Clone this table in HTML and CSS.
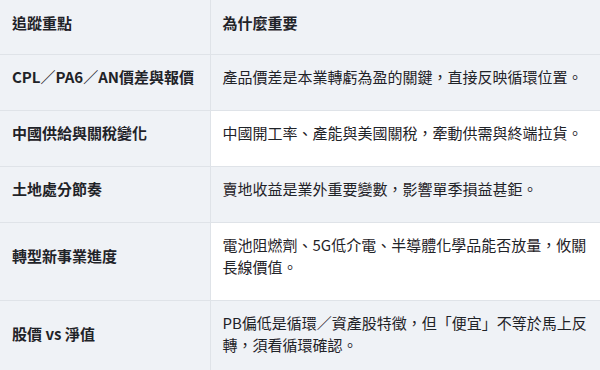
FILE: index.html
```html
<!DOCTYPE html>
<html lang="zh-Hant">
<head>
<meta charset="utf-8">
<link rel="stylesheet" href="styles.css">
</head>
<body>
<table class="track-table">
  <colgroup>
    <col class="col-key">
    <col class="col-why">
  </colgroup>
  <thead>
    <tr>
      <th>追蹤重點</th>
      <th>為什麼重要</th>
    </tr>
  </thead>
  <tbody>
    <tr>
      <th>CPL／PA6／AN價差與報價</th>
      <td>產品價差是本業轉虧為盈的關鍵，直接反映循環位置。</td>
    </tr>
    <tr>
      <th>中國供給與關稅變化</th>
      <td>中國開工率、產能與美國關稅，牽動供需與終端拉貨。</td>
    </tr>
    <tr>
      <th>土地處分節奏</th>
      <td>賣地收益是業外重要變數，影響單季損益甚鉅。</td>
    </tr>
    <tr>
      <th>轉型新事業進度</th>
      <td>電池阻燃劑、5G低介電、半導體化學品能否放量，攸關長線價值。</td>
    </tr>
    <tr>
      <th>股價 vs 淨值</th>
      <td>PB偏低是循環／資產股特徵，但「便宜」不等於馬上反轉，須看循環確認。</td>
    </tr>
  </tbody>
</table>
</body>
</html>
```

FILE: styles.css
```css
html, body {
  margin: 0;
  padding: 0;
  background: #ffffff;
}

body {
  font-family: "Noto Sans CJK TC", "Noto Sans", sans-serif;
  font-size: 15px;
  color: #1f2328;
}

.track-table {
  width: 600px;
  border-collapse: collapse;
  table-layout: fixed;
}

.col-key {
  width: 210px;
}

.col-why {
  width: 390px;
}

.track-table th,
.track-table td {
  padding: 11px 12px 22px;
  line-height: 22px;
  text-align: left;
  vertical-align: middle;
  border-bottom: 1px solid #dfe3e8;
}

.track-table th {
  font-weight: 700;
  background: #eff2f6;
  border-right: 1px solid #dfe3e8;
}

.track-table thead th {
  padding-top: 12px;
  padding-bottom: 20px;
}

.track-table td {
  font-weight: 400;
  background: #ffffff;
}

.track-table tbody tr:nth-child(odd) td {
  background: #eff2f6;
}
```
